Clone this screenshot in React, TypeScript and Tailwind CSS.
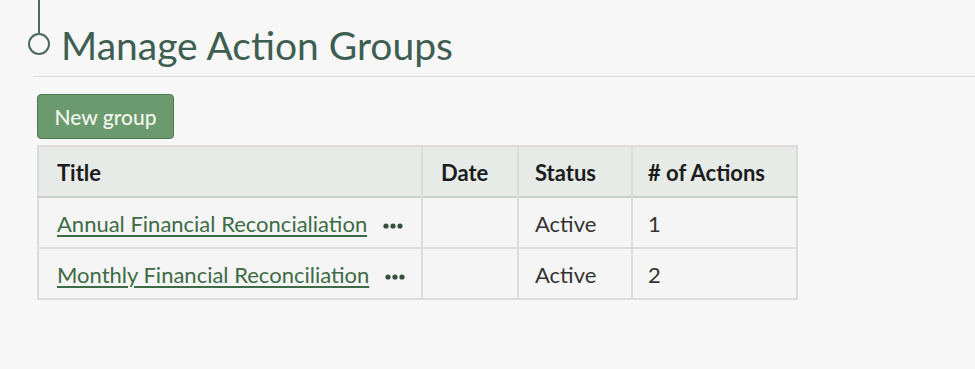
const groups = [
  { title: 'Annual Financial Reconcialiation', date: '', status: 'Active', count: 1 },
  { title: 'Monthly Financial Reconciliation', date: '', status: 'Active', count: 2 },
];

function Dots() {
  return (
    <svg width="20" height="6" viewBox="0 0 20 6" className="ml-[16px] mt-[4px] text-[#34503c]" fill="currentColor">
      <circle cx="3" cy="3" r="2.6" />
      <circle cx="10" cy="3" r="2.6" />
      <circle cx="17" cy="3" r="2.6" />
    </svg>
  );
}

export default function App() {
  return (
    <div className="min-h-[369px] w-[975px] overflow-hidden bg-[#f7f7f7] font-['Lato',sans-serif] text-[#222]">
      <div className="flex">
        <div className="ml-[28px] flex w-[22px] flex-col items-center">
          <div className="h-[33px] w-[2px] bg-[#4b6a58]" />
          <div className="h-[22px] w-[22px] rounded-full border-2 border-[#4b6a58]" />
        </div>
        <h1 className="ml-[11px] pt-[22px] text-[39px] leading-[46px] text-[#3f5e52]">Manage Action Groups</h1>
      </div>
      <div className="ml-[33px] mt-[8px] h-px bg-[#dddddd]" />

      <div className="ml-[37px] mt-[17px]">
        <button className="h-[45px] w-[137px] rounded-[4px] border border-[#4a7a52] bg-[#6a9a6e] text-[21px] leading-none font-medium text-[#f4f8ef]">
          New group
        </button>

        <table className="mt-[6px] border-collapse border-2 border-[#dcdcdc] text-[22px] leading-[26px]">
          <thead>
            <tr className="h-[51px] border-b-2 border-[#c9cfcb] bg-[#e6ebe7] text-left font-bold text-[#1c1c1c]">
              <th className="w-[384px] border-r-2 border-[#dcdcdc] pl-[18px] pt-[2px]">Title</th>
              <th className="w-[96px] border-r-2 border-[#dcdcdc] pl-[18px] pt-[2px]">Date</th>
              <th className="w-[114px] border-r-2 border-[#dcdcdc] pl-[16px] pt-[2px]">Status</th>
              <th className="w-[165px] pl-[15px] pt-[2px]"># of Actions</th>
            </tr>
          </thead>
          <tbody>
            {groups.map((g) => (
              <tr key={g.title} className="h-[51px] border-b-2 border-[#dcdcdc] bg-[#f5f5f5]">
                <td className="border-r-2 border-[#dcdcdc] pl-[18px] pt-[2px]">
                  <div className="flex items-center">
                    <a href="#" className="text-[#3d6b45] underline underline-offset-[3px]">
                      {g.title}
                    </a>
                    <Dots />
                  </div>
                </td>
                <td className="border-r-2 border-[#dcdcdc]">{g.date}</td>
                <td className="border-r-2 border-[#dcdcdc] pl-[16px] pt-[2px] text-[#333]">{g.status}</td>
                <td className="pl-[15px] pt-[2px] text-[#333]">{g.count}</td>
              </tr>
            ))}
          </tbody>
        </table>
      </div>
    </div>
  );
}
